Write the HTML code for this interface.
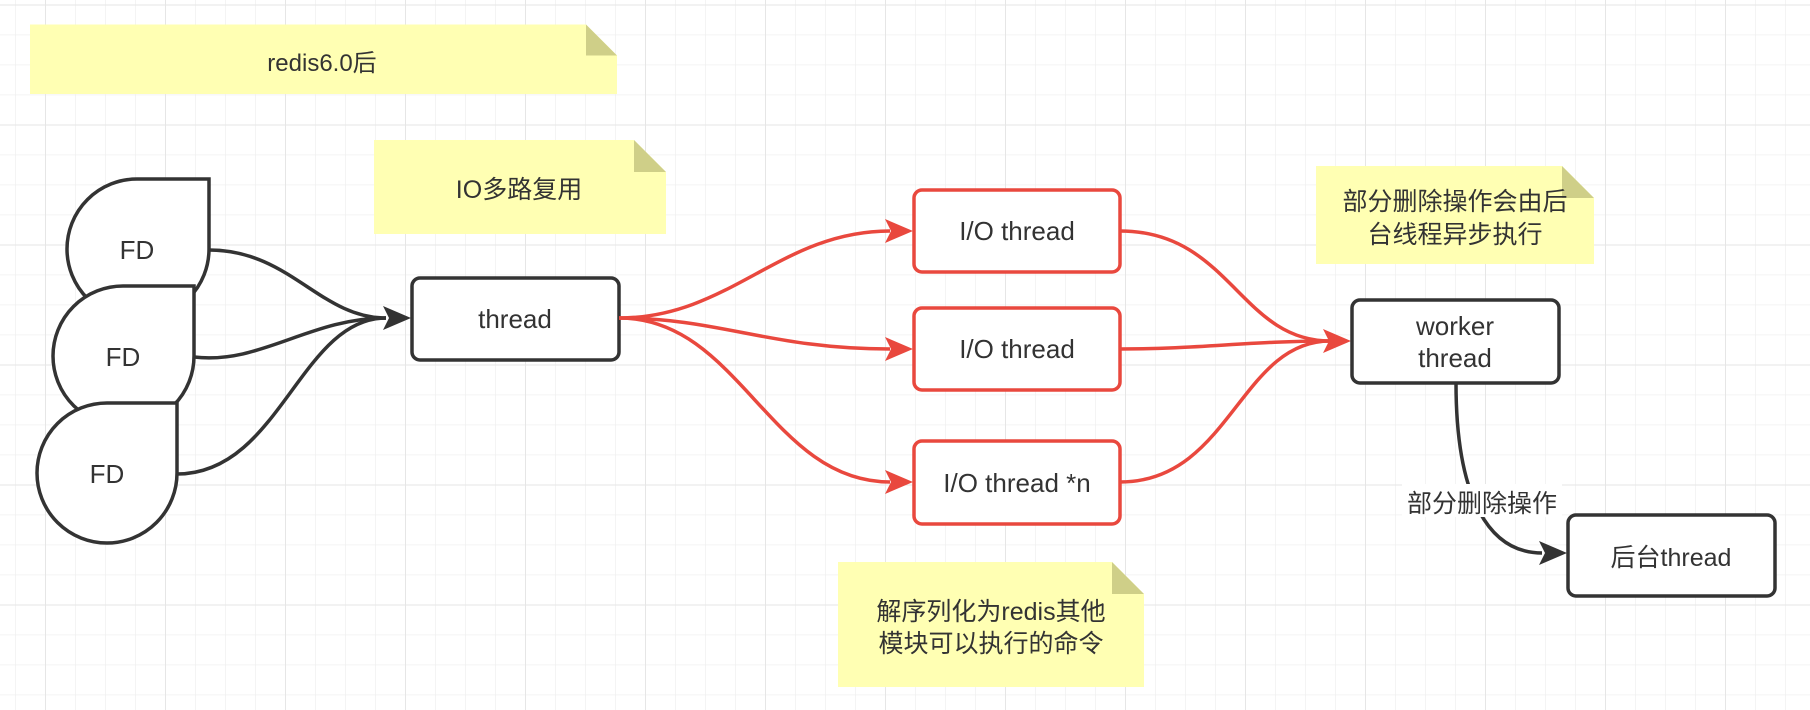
<!DOCTYPE html>
<html><head><meta charset="utf-8"><style>
html,body{margin:0;padding:0;background:#fff;}
svg{display:block;}
text{font-family:"Liberation Sans","Noto Sans CJK SC",sans-serif;fill:#333;}
</style></head><body>
<svg width="1810" height="710" viewBox="0 0 1810 710" xmlns="http://www.w3.org/2000/svg">
<defs>
<pattern id="minor" x="15" y="4.5" width="30" height="30" patternUnits="userSpaceOnUse">
<path d="M0 0H30M0 0V30" stroke="#f0f0f0" stroke-width="1.5" fill="none"/>
</pattern>
<pattern id="major" x="45" y="4.5" width="120" height="120" patternUnits="userSpaceOnUse">
<path d="M0 0H120M0 0V120" stroke="#e6e6e6" stroke-width="2" fill="none"/>
</pattern>
</defs>
<rect width="1810" height="710" fill="url(#minor)"/>
<rect width="1810" height="710" fill="url(#major)"/>

<!-- notes -->
<g>
<path d="M30 24.5H586L617 55.5V94H30Z" fill="#ffffb3"/>
<path d="M586 24.5L617 55.5H586Z" fill="#cfcf88"/>
<text x="322" y="71" font-size="24" text-anchor="middle">redis6.0后</text>

<path d="M374 140H634L666 172V234H374Z" fill="#ffffb3"/>
<path d="M634 140L666 172H634Z" fill="#cfcf88"/>
<text x="519" y="198" font-size="25" text-anchor="middle">IO多路复用</text>

<path d="M1316 166H1562L1594 198V264H1316Z" fill="#ffffb3"/>
<path d="M1562 166L1594 198H1562Z" fill="#cfcf88"/>
<text x="1455" y="210" font-size="25" text-anchor="middle">部分删除操作会由后</text>
<text x="1455" y="243" font-size="25" text-anchor="middle">台线程异步执行</text>

<path d="M838 562H1112L1144 594V687H838Z" fill="#ffffb3"/>
<path d="M1112 562L1144 594H1112Z" fill="#cfcf88"/>
<text x="991" y="620" font-size="25" text-anchor="middle">解序列化为redis其他</text>
<text x="991" y="652" font-size="25" text-anchor="middle">模块可以执行的命令</text>
</g>

<!-- dark edges from FD -->
<g fill="none" stroke="#333" stroke-width="3.5">
<path d="M209 250C290 250 320 318 386 318"/>
<path d="M194 357C260 365 310 318 386 318"/>
<path d="M177 474C280 474 300 318 386 318"/>
</g>
<path d="M411 318L383 306L389 318L383 330Z" fill="#333"/>

<!-- FD shapes -->
<g fill="#fff" stroke="#333" stroke-width="3.5">
<path d="M137 179H209V249A70 70 0 0 1 139 319A70 70 0 0 1 67 249A70 70 0 0 1 137 179Z"/>
<path d="M123 286H194V356A70 70 0 0 1 124 426A70 70 0 0 1 53 356A70 70 0 0 1 123 286Z"/>
<path d="M107 403H177V473A70 70 0 0 1 107 543A70 70 0 0 1 37 473A70 70 0 0 1 107 403Z"/>
</g>
<text x="137" y="259" font-size="26" text-anchor="middle">FD</text>
<text x="123" y="366" font-size="26" text-anchor="middle">FD</text>
<text x="107" y="483" font-size="26" text-anchor="middle">FD</text>

<!-- thread box -->
<rect x="412" y="278" width="207" height="82" rx="8" fill="#fff" stroke="#333" stroke-width="3.5"/>
<text x="515" y="328" font-size="26" text-anchor="middle">thread</text>

<!-- red edges -->
<g fill="none" stroke="#e9483e" stroke-width="3.5">
<path d="M619 318C730 318 780 231 890 231"/>
<path d="M619 318C720 318 770 349 890 349"/>
<path d="M619 318C740 318 770 482 890 482"/>
<path d="M1120 231C1230 231 1240 341 1330 341"/>
<path d="M1120 349C1200 349 1250 341 1330 341"/>
<path d="M1120 482C1230 482 1240 341 1330 341"/>
</g>
<g fill="#e9483e">
<path d="M913 231L885 219L891 231L885 243Z"/>
<path d="M913 349L885 337L891 349L885 361Z"/>
<path d="M913 482L885 470L891 482L885 494Z"/>
<path d="M1351 341L1323 329L1329 341L1323 353Z"/>
</g>

<!-- I/O boxes -->
<g fill="#fff" stroke="#e9483e" stroke-width="3.5">
<rect x="914" y="190" width="206" height="82" rx="8"/>
<rect x="914" y="308" width="206" height="82" rx="8"/>
<rect x="914" y="441" width="206" height="83" rx="8"/>
</g>
<text x="1017" y="240" font-size="26" text-anchor="middle">I/O thread</text>
<text x="1017" y="358" font-size="26" text-anchor="middle">I/O thread</text>
<text x="1017" y="492" font-size="26" text-anchor="middle">I/O thread *n</text>

<!-- worker -->
<rect x="1352" y="300" width="207" height="83" rx="8" fill="#fff" stroke="#333" stroke-width="3.5"/>
<text x="1455" y="335" font-size="26" text-anchor="middle">worker</text>
<text x="1455" y="367" font-size="26" text-anchor="middle">thread</text>

<!-- worker -> backend -->
<path d="M1456 383C1456 500 1490 553 1542 553" fill="none" stroke="#333" stroke-width="3.5"/>
<path d="M1567 553L1539 541L1545 553L1539 565Z" fill="#333"/>
<rect x="1402" y="484" width="160" height="33" fill="#fff"/>
<text x="1482" y="512" font-size="25" text-anchor="middle">部分删除操作</text>

<rect x="1568" y="515" width="207" height="81" rx="8" fill="#fff" stroke="#333" stroke-width="3.5"/>
<text x="1671" y="566" font-size="25" text-anchor="middle">后台thread</text>
</svg>
</body></html>
